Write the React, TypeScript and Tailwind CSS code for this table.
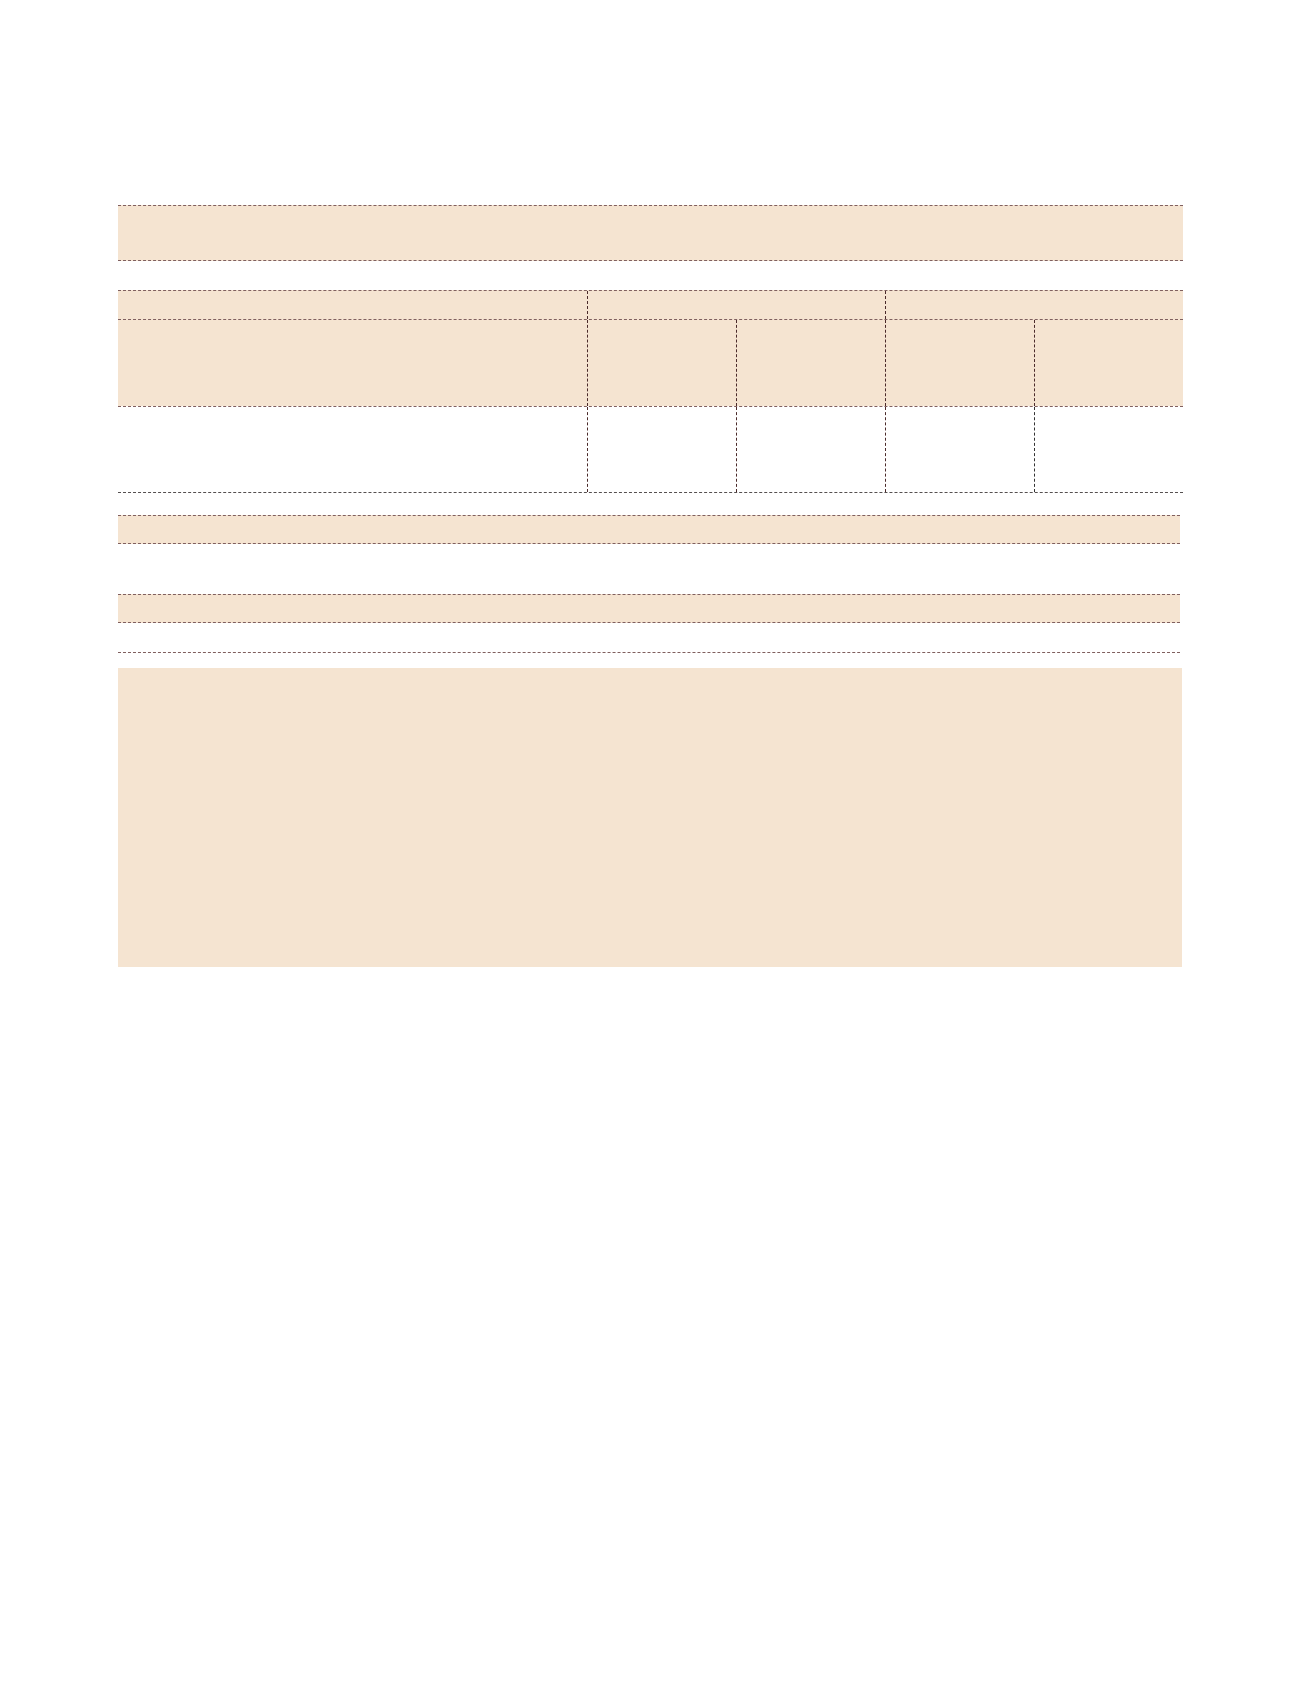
import React from "react";

const cols = "grid grid-cols-[469px_149px_149px_149px_149px]";

const App = () => {
  return (
    <div className="min-h-[1692px] bg-white pl-[118px] pt-[205px] font-['Liberation_Sans',sans-serif]">
      <div className="w-[1065px]">
        {/* title band */}
        <div className="h-[56px] border-y border-dashed border-[#80605f] bg-[#f5e4d1]" />

        {/* main table */}
        <div className="mt-[29px] border-b border-dashed border-[#555050]">
          <div className={`${cols} h-[29px] border-t border-dashed border-[#80605f] bg-[#f5e4d1]`}>
            <div />
            <div className="col-span-2 border-l border-dashed border-[#4a2a2a]" />
            <div className="col-span-2 border-l border-dashed border-[#4a2a2a]" />
          </div>
          <div className={`${cols} h-[87px] border-t border-dashed border-[#80605f] bg-[#f5e4d1]`}>
            <div />
            <div className="border-l border-dashed border-[#4a2a2a]" />
            <div className="border-l border-dashed border-[#4a2a2a]" />
            <div className="border-l border-dashed border-[#4a2a2a]" />
            <div className="border-l border-dashed border-[#4a2a2a]" />
          </div>
          <div className={`${cols} h-[86px] border-t border-dashed border-[#80605f]`}>
            <div />
            <div className="border-l border-dashed border-[#4a2a2a]" />
            <div className="border-l border-dashed border-[#4a2a2a]" />
            <div className="border-l border-dashed border-[#4a2a2a]" />
            <div className="border-l border-dashed border-[#333333]" />
          </div>
        </div>

        {/* note band */}
        <div className="mt-[22px] h-[29px] w-[1062px] border-y border-dashed border-[#80605f] bg-[#f5e4d1]" />

        {/* second small table */}
        <div className="mt-[50px] w-[1062px] border-b border-dashed border-[#80605f]">
          <div className="h-[29px] border-y border-dashed border-[#80605f] bg-[#f5e4d1]" />
          <div className="h-[29px]" />
        </div>

        {/* large panel */}
        <div className="mt-[15px] h-[299px] w-[1064px] bg-[#f5e4d1]" />
      </div>
    </div>
  );
};

export default App;
